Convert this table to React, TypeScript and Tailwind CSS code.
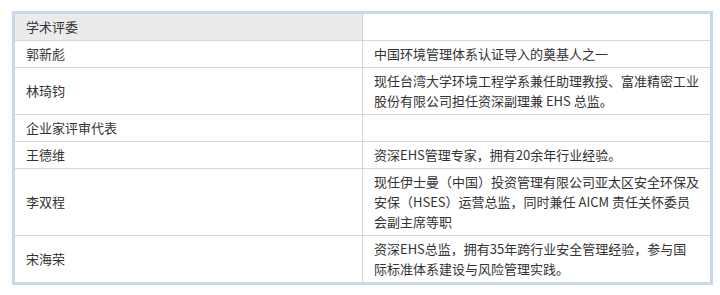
import React from "react";

type Row = { name: string; desc: string[]; header?: boolean };

const rows: Row[] = [
  { name: "学术评委", desc: [], header: true },
  { name: "郭新彪", desc: ["中国环境管理体系认证导入的奠基人之一"] },
  {
    name: "林琦钧",
    desc: [
      "现任台湾大学环境工程学系兼任助理教授、富准精密工业",
      "股份有限公司担任资深副理兼 EHS 总监。",
    ],
  },
  { name: "企业家评审代表", desc: [] },
  { name: "王德维", desc: ["资深EHS管理专家，拥有20余年行业经验。"] },
  {
    name: "李双程",
    desc: [
      "现任伊士曼（中国）投资管理有限公司亚太区安全环保及",
      "安保（HSES）运营总监，同时兼任 AICM 责任关怀委员",
      "会副主席等职",
    ],
  },
  {
    name: "宋海荣",
    desc: [
      "资深EHS总监，拥有35年跨行业安全管理经验，参与国",
      "际标准体系建设与风险管理实践。",
    ],
  },
];

export default function App() {
  return (
    <div
      className="w-[720px] h-[295px] bg-white pt-[11px] pl-[12px]"
      style={{ fontFamily: '"Noto Sans CJK SC", "Noto Sans", sans-serif' }}
    >
      <div className="w-[701px] border-2 border-[#c5d8f6]">
        <table className="w-full table-fixed border-collapse text-[13px] leading-[20px] text-[#333333]">
          <tbody>
            {rows.map((r, i) => (
              <tr key={i}>
                <td
                  className={
                    "border border-[#d6d6da] px-[11px] py-[3px] align-middle whitespace-nowrap overflow-hidden " +
                    (r.header ? "bg-[#ebebed]" : "bg-white")
                  }
                >
                  {r.name}
                </td>
                <td className="border border-[#d6d6da] px-[11px] py-[3px] align-middle bg-white overflow-hidden">
                  {r.desc.length === 0 ? (
                    <div className="h-[20px]" />
                  ) : (
                    r.desc.map((l, j) => (
                      <div key={j} className="whitespace-nowrap">
                        {l}
                      </div>
                    ))
                  )}
                </td>
              </tr>
            ))}
          </tbody>
        </table>
      </div>
    </div>
  );
}
